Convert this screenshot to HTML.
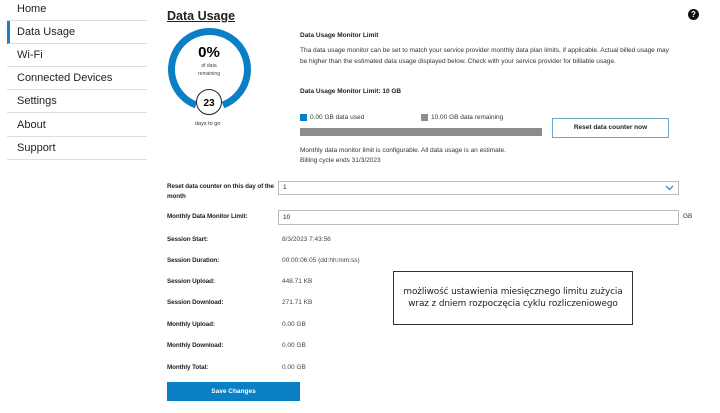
<!DOCTYPE html>
<html><head><meta charset="utf-8"><style>
body{margin:0;width:720px;height:413px;background:#fff;font-family:"Liberation Sans",sans-serif;color:#222;position:relative;overflow:hidden}
.a{position:absolute;white-space:nowrap}
.nav{position:absolute;left:7px;width:140px;height:23px;border-bottom:1px solid #ddd;font-size:11px;line-height:23px;padding-left:10px;box-sizing:border-box}
.s{font-size:6.5px;color:#333}
.b{font-size:6.5px;font-weight:bold;color:#222}
.lbl{position:absolute;left:167px;font-size:6.3px;font-weight:bold;color:#222;letter-spacing:-0.1px}
.val{position:absolute;left:282px;font-size:6.5px;color:#444}
</style></head><body>
<div class="nav" style="top:-2px">Home</div>
<div class="nav" style="top:21px;border-left:3px solid #1f7fc0;padding-left:7px">Data Usage</div>
<div class="nav" style="top:44px">Wi-Fi</div>
<div class="nav" style="top:67px">Connected Devices</div>
<div class="nav" style="top:90px">Settings</div>
<div class="nav" style="top:114px">About</div>
<div class="nav" style="top:137px">Support</div>

<div class="a" style="left:167px;top:9px;font-size:12.5px;font-weight:bold;text-decoration:underline">Data Usage</div>
<svg class="a" style="left:165px;top:25px" width="90" height="95" viewBox="0 0 90 95">
<path d="M31 80 A38 38 0 1 1 58 80" fill="none" stroke="#0a7fc6" stroke-width="7"/>
<circle cx="44" cy="77" r="12.5" fill="#fff" stroke="#222" stroke-width="1"/>
<text x="44" y="81" font-size="10" text-anchor="middle" font-family="Liberation Sans" font-weight="bold">23</text>
<text x="44" y="32" font-size="15" text-anchor="middle" font-family="Liberation Sans" font-weight="bold">0%</text>
<text x="44" y="42" font-size="5" text-anchor="middle" font-family="Liberation Sans" fill="#444">of data</text>
<text x="44" y="50" font-size="5" text-anchor="middle" font-family="Liberation Sans" fill="#444">remaining</text>
</svg>
<div class="a s" style="left:195px;top:121px;font-size:5.5px">days to go</div>

<div class="a b" style="left:300px;top:32px">Data Usage Monitor Limit</div>
<div class="a s" style="left:300px;top:47px">Tha data usage monitor can be set to match your service provider monthly data plan limits, if applicable. Actual billed usage may</div>
<div class="a s" style="left:300px;top:58px">be higher than the estimated data usage displayed below. Check with your service provider for billiable usage.</div>
<div class="a b" style="left:300px;top:88px">Data Usage Monitor Limit: 10 GB</div>
<div class="a" style="left:300px;top:114px;width:7px;height:7px;background:#0a7fc6"></div>
<div class="a s" style="left:310px;top:114px">0.00 GB data used</div>
<div class="a" style="left:421px;top:114px;width:7px;height:7px;background:#8c8c8c"></div>
<div class="a s" style="left:431px;top:114px">10.00 GB data remaining</div>
<div class="a" style="left:300px;top:128px;width:242px;height:8px;background:#8c8c8c"></div>
<div class="a" style="left:552px;top:118px;width:115px;height:18px;border:1px solid #6fa8c8;font-size:6.5px;font-weight:bold;text-align:center;line-height:18px">Reset data counter now</div>
<div class="a s" style="left:300px;top:147px">Monthly data monitor limit is configurable. All data usage is an estimate.</div>
<div class="a s" style="left:300px;top:157px">Billing cycle ends 31/3/2023</div>

<div class="lbl" style="top:182px;line-height:10px;white-space:nowrap">Reset data counter on this day of the<br>month</div>
<div class="a" style="left:278px;top:181px;width:401px;height:14px;border:1px solid #bbb;font-size:6.5px;line-height:12px;padding-left:4px;box-sizing:border-box;background:#fff">1</div>
<svg class="a" style="left:665px;top:185px" width="9" height="6"><path d="M1 1 L4.5 4.5 L8 1" fill="none" stroke="#3a8fc8" stroke-width="1.3"/></svg>
<div class="lbl" style="top:213px">Monthly Data Monitor Limit:</div>
<div class="a" style="left:278px;top:210px;width:401px;height:15px;border:1px solid #bbb;font-size:6.5px;line-height:13px;padding-left:4px;box-sizing:border-box">10</div>
<div class="a s" style="left:683px;top:213px">GB</div>
<div class="lbl" style="top:236px">Session Start:</div><div class="val" style="top:236px">8/3/2023 7:43:56</div>
<div class="lbl" style="top:257px">Session Duration:</div><div class="val" style="top:257px">00:00:06:05 (dd:hh:mm:ss)</div>
<div class="lbl" style="top:278px">Session Upload:</div><div class="val" style="top:278px">448.71 KB</div>
<div class="lbl" style="top:299px">Session Download:</div><div class="val" style="top:299px">271.71 KB</div>
<div class="lbl" style="top:321px">Monthly Upload:</div><div class="val" style="top:321px">0.00 GB</div>
<div class="lbl" style="top:342px">Monthly Download:</div><div class="val" style="top:342px">0.00 GB</div>
<div class="lbl" style="top:364px">Monthly Total:</div><div class="val" style="top:364px">0.00 GB</div>
<div class="a" style="left:167px;top:382px;width:133px;height:19px;background:#0a7fc6;color:#fff;font-size:6.5px;font-weight:bold;text-align:center;line-height:19px">Save Changes</div>

<div class="a" style="left:393px;top:271px;width:238px;height:52px;border:1px solid #333;font-family:'DejaVu Sans',sans-serif;font-size:8.9px;text-align:center;line-height:12px;display:flex;align-items:center;justify-content:center;letter-spacing:-0.1px">możliwość ustawienia miesięcznego limitu zużycia<br>wraz z dniem rozpoczęcia cyklu rozliczeniowego</div>

<div class="a" style="left:688px;top:9px;width:11px;height:11px;border-radius:50%;background:#111;color:#fff;font-size:8px;font-weight:bold;text-align:center;line-height:11px">?</div>
</body></html>
